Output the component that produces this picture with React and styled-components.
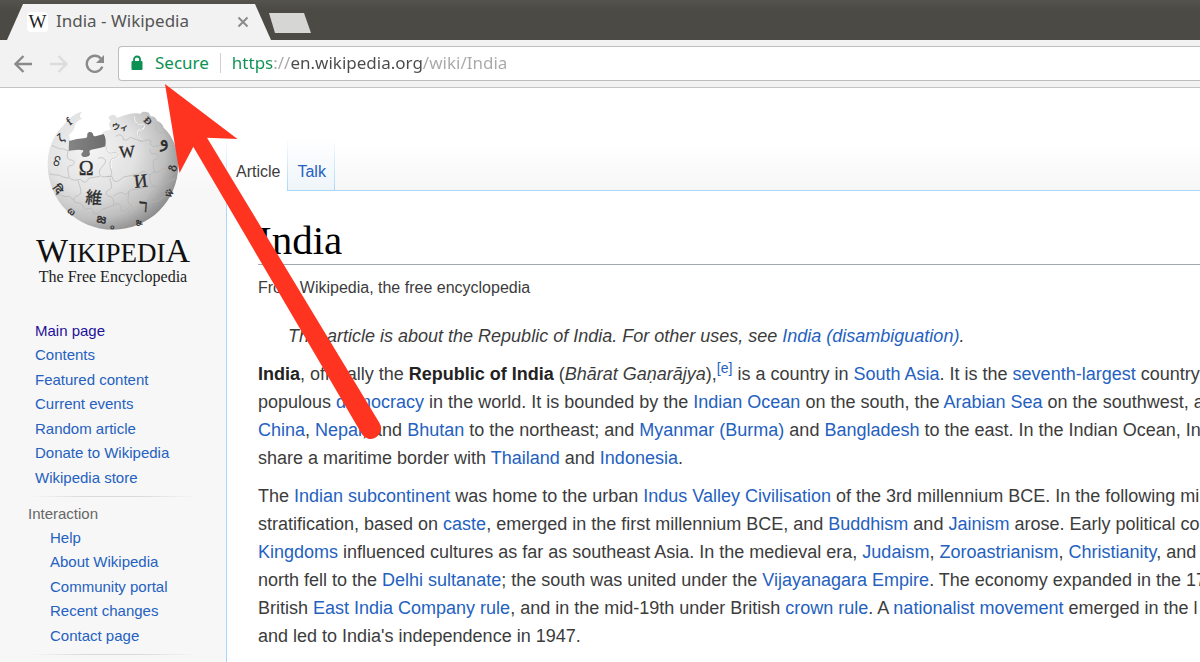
import React from "react";
import styled, { createGlobalStyle } from "styled-components";

const mainLinks = [
  "Main page",
  "Contents",
  "Featured content",
  "Current events",
  "Random article",
  "Donate to Wikipedia",
  "Wikipedia store",
];

const interactionLinks = [
  "Help",
  "About Wikipedia",
  "Community portal",
  "Recent changes",
  "Contact page",
];

const Wiki = ({ children }) => <Link href="#">{children}</Link>;

const Globe = () => (
  <GlobeSvg viewBox="78 40 402 372" role="img" aria-label="Wikipedia globe">
    <defs>
      <radialGradient id="ball" cx="0.33" cy="0.34" r="0.76">
        <stop offset="0" stopColor="#f4f4f4" />
        <stop offset="0.45" stopColor="#e2e2e2" />
        <stop offset="0.75" stopColor="#bebebe" />
        <stop offset="1" stopColor="#808080" />
      </radialGradient>
      <linearGradient id="hole" x1="0" y1="0" x2="1" y2="0">
        <stop offset="0" stopColor="#858585" />
        <stop offset="1" stopColor="#6c6c6c" />
      </linearGradient>
    </defs>
    <path
      fill="url(#ball)"
      d="M187 52C176 60 179 68 186 72C176 77 165 84 164 96C163 105 156 112 147 121L152 140L252 122L246 114C254 108 262 107 270 107C276 101 265 95 267 88C270 80 275 78 268 74C262 68 272 58 284 62C292 66 287 72 297 68C318 60 339 53 358 57C366 57 363 50 374 51C389 52 389 59 393 65C404 65 409 71 411 78C424 83 429 91 431 99C445 111 454 127 461 142C470 163 476 187 475 211C474 318 389 405 279 405C171 405 83 318 83 210C83 165 98 127 125 98C136 84 148 69 164 60C173 55 180 52 187 52Z"
    />
    <path
      fill="url(#hole)"
      d="M147 139C163 134 178 132 197 130C204 128 201 122 202 117C206 109 218 111 219 119C220 124 222 126 229 124L251 118C258 128 258 142 256 155C241 160 228 163 214 165C207 166 208 172 210 177C210 187 190 190 185 183C181 174 193 172 189 167C175 163 159 167 146 169Z"
    />
    <g fill="none" stroke="#ffffff" strokeWidth="4">
      <path d="M258 157C261 169 269 177 282 174C299 173 298 188 286 190C270 192 270 205 274 222" />
      <path d="M343 64C340 84 350 89 362 87C378 90 373 103 360 106C348 110 356 123 361 137" />
    </g>
    <g fill="none" stroke="#b4b4b4" strokeWidth="2">
      <path d="M144 170C138 190 145 197 155 196C169 199 161 214 151 213C139 214 144 232 148 248" />
      <path d="M258 155C259 170 267 178 279 174C296 170 300 187 285 190C270 190 267 207 273 225C279 243 272 247 260 246" />
      <path d="M234 191C251 184 263 197 253 208C242 223 234 228 240 241C247 253 270 241 276 246C281 270 296 260 311 247L357 238" />
      <path d="M148 248C157 260 169 256 182 254C190 267 204 263 205 251L240 245" />
      <path d="M174 258C179 275 187 289 179 300C169 305 160 306 162 319C169 329 178 321 185 330L197 344" />
      <path d="M269 250C274 269 280 279 267 286C255 288 256 302 267 305C277 305 283 312 281 333" />
      <path d="M198 345C213 335 222 344 220 355C232 363 240 350 247 344L282 332C294 321 309 331 302 344C303 354 317 350 327 337" />
      <path d="M343 64C336 80 348 91 361 86C374 87 374 99 360 106C351 110 356 126 362 141" />
      <path d="M287 125C300 116 311 122 309 134C318 140 326 132 331 128L361 139C374 142 383 130 393 139C389 154 398 158 413 153L458 149" />
      <path d="M391 164C389 176 399 180 407 177C421 182 417 194 404 194C395 199 402 218 403 235" />
      <path d="M357 239C367 228 374 227 382 238C392 245 398 233 403 231C420 237 425 221 433 222L471 207" />
      <path d="M389 242C389 263 393 273 404 274C415 279 407 289 397 292C389 295 389 310 383 326" />
      <path d="M281 303C294 297 303 289 313 298C324 302 326 287 334 286L384 278C397 271 420 280 434 267L467 251" />
      <path d="M327 288C326 309 319 318 330 330C342 335 336 343 326 348L320 377" />
      <path d="M384 326C396 317 412 326 421 313L449 296" />
      <path d="M96 153C109 157 119 166 128 162L145 169" />
      <path d="M88 237C103 244 116 237 125 246L147 251" />
      <path d="M105 301C121 295 132 310 148 305L161 316" />
      <path d="M409 92C403 107 414 115 424 113L443 116" />
    </g>
    <GlobeLetters>
      <text x="176" y="242" fontSize="60">Ω</text>
      <text x="297" y="188" fontSize="50" transform="rotate(-4 320 172)">W</text>
      <text x="342" y="278" fontSize="56" transform="rotate(-7 360 260)">И</text>
      <text x="197" y="327" fontSize="50" transform="rotate(6 222 310)">維</text>
      <text x="357" y="352" fontSize="54" transform="rotate(5 371 335)">ר</text>
      <text x="276" y="106" fontSize="25" transform="rotate(6 298 92)">ウィ</text>
      <text x="374" y="92" fontSize="40" transform="rotate(45 388 80)">ᴆ</text>
      <text x="417" y="155" fontSize="58" transform="rotate(-12 430 147)">و</text>
      <text x="117" y="140" fontSize="36" transform="rotate(-38 125 132)">ζ</text>
      <text x="94" y="212" fontSize="34" transform="rotate(-76 106 202)">တ</text>
      <text x="101" y="294" fontSize="34" transform="rotate(54 113 282)">दि</text>
      <text x="143" y="361" fontSize="34" transform="rotate(39 157 352)">ω</text>
      <text x="229" y="385" fontSize="40" transform="rotate(12 245 376)">జ</text>
      <text x="347" y="391" fontSize="25" transform="rotate(-20 360 383)">&</text>
      <text x="436" y="304" fontSize="34" transform="rotate(-58 450 295)">ẅ</text>
      <text x="443" y="225" fontSize="32" transform="rotate(-72 455 216)">გ</text>
      <text x="142" y="88" fontSize="34" transform="rotate(-38 152 80)">f</text>
      <text x="270" y="403" fontSize="18">ഠ</text>
    </GlobeLetters>
  </GlobeSvg>
);

const Arrow = () => (
  <ArrowSvg viewBox="0 0 240 360" aria-hidden="true">
    <path
      fill="#ff3420"
      d="M5 4L77.500 59L47 57.700L219.500 343A10 10 0 0 1 201.800 354L33.300 66.700L19.500 93Z"
    />
  </ArrowSvg>
);

const App = () => {
  return (
    <>
      <GlobalStyle />
      <TabStrip>
        <Tab>
          <Favicon>W</Favicon>
          <TabTitle>India - Wikipedia</TabTitle>
          <IconButton aria-label="Close tab">
            <svg width="12" height="12" viewBox="0 0 12 12">
              <path d="M1.500 1.500L10.500 10.500M10.500 1.500L1.500 10.500" stroke="#8b8b8b" strokeWidth="2" />
            </svg>
          </IconButton>
        </Tab>
        <NewTab aria-label="New tab" />
      </TabStrip>

      <Toolbar>
        <IconButton aria-label="Back">
          <svg width="20" height="20" viewBox="0 0 20 20" fill="none" stroke="#8a8a8a" strokeWidth="2.400">
            <path d="M19 10H3M10.500 2L2.500 10L10.500 18" />
          </svg>
        </IconButton>
        <IconButton aria-label="Forward">
          <svg width="20" height="20" viewBox="0 0 20 20" fill="none" stroke="#dcdcdc" strokeWidth="2.400">
            <path d="M1 10H17M9.500 2L17.500 10L9.500 18" />
          </svg>
        </IconButton>
        <IconButton aria-label="Reload">
          <svg width="20" height="20" viewBox="0 0 20 20">
            <path d="M17.300 12.600A8 8 0 1 1 15.800 4.500" fill="none" stroke="#8a8a8a" strokeWidth="2.400" />
            <path d="M19 1V9H11Z" fill="#8a8a8a" />
          </svg>
        </IconButton>
        <AddressBar>
          <svg width="12" height="16" viewBox="0 0 12 16">
            <path d="M3 7V4.500A3 3 0 0 1 9 4.500V7" fill="none" stroke="#0b9152" strokeWidth="1.800" />
            <rect x="0.500" y="6" width="11" height="9" rx="1" fill="#0b9152" />
          </svg>
          <Secure>Secure</Secure>
          <UrlInput aria-label="Address" defaultValue="https://en.wikipedia.org/wiki/India" />
        </AddressBar>
      </Toolbar>

      <Page>
        <Sidebar>
          <Logo href="#">
            <Globe />
            <Wordmark>
              <Cap>W</Cap>IKIPEDI<Cap>A</Cap>
            </Wordmark>
            <Tagline>The Free Encyclopedia</Tagline>
          </Logo>
          <NavList>
            {mainLinks.map((name, i) => (
              <li key={name}>
                <NavLink href="#" $visited={i === 0}>
                  {name}
                </NavLink>
              </li>
            ))}
          </NavList>
          <Divider />
          <NavTitle>Interaction</NavTitle>
          <NavList $nested>
            {interactionLinks.map((name) => (
              <li key={name}>
                <NavLink href="#">{name}</NavLink>
              </li>
            ))}
          </NavList>
          <Divider />
        </Sidebar>

        <Content>
          <PageTabs>
            <PageTab href="#" $active>
              Article
            </PageTab>
            <PageTab href="#">Talk</PageTab>
            <TabsRest />
          </PageTabs>
          <Article>
            <Title>India</Title>
            <SiteSub>From Wikipedia, the free encyclopedia</SiteSub>
            <Hatnote>
              This article is about the Republic of India. For other uses, see{" "}
              <Wiki>India (disambiguation)</Wiki>.
            </Hatnote>
            <Paragraph>
              <b>India</b>, officially the <b>Republic of India</b> (<i>Bhārat Gaṇarājya</i>),
              <Sup>
                <Wiki>[e]</Wiki>
              </Sup>{" "}
              is a country in <Wiki>South Asia</Wiki>. It is the <Wiki>seventh-largest</Wiki> country
              <br />
              populous <Wiki>democracy</Wiki> in the world. It is bounded by the{" "}
              <Wiki>Indian Ocean</Wiki> on the south, the <Wiki>Arabian Sea</Wiki> on the southwest, a
              <br />
              <Wiki>China</Wiki>, <Wiki>Nepal</Wiki>, and <Wiki>Bhutan</Wiki> to the northeast; and{" "}
              <Wiki>Myanmar (Burma)</Wiki> and <Wiki>Bangladesh</Wiki> to the east. In the Indian
              Ocean, In
              <br />
              share a maritime border with <Wiki>Thailand</Wiki> and <Wiki>Indonesia</Wiki>.
            </Paragraph>
            <Paragraph>
              The <Wiki>Indian subcontinent</Wiki> was home to the urban{" "}
              <Wiki>Indus Valley Civilisation</Wiki> of the 3rd millennium BCE. In the following mil
              <br />
              stratification, based on <Wiki>caste</Wiki>, emerged in the first millennium BCE, and{" "}
              <Wiki>Buddhism</Wiki> and <Wiki>Jainism</Wiki> arose. Early political co
              <br />
              <Wiki>Kingdoms</Wiki> influenced cultures as far as southeast Asia. In the medieval era,{" "}
              <Wiki>Judaism</Wiki>, <Wiki>Zoroastrianism</Wiki>, <Wiki>Christianity</Wiki>, and
              <br />
              north fell to the <Wiki>Delhi sultanate</Wiki>; the south was united under the{" "}
              <Wiki>Vijayanagara Empire</Wiki>. The economy expanded in the 17
              <br />
              British <Wiki>East India Company rule</Wiki>, and in the mid-19th under British{" "}
              <Wiki>crown rule</Wiki>. A <Wiki>nationalist movement</Wiki> emerged in the l
              <br />
              and led to India's independence in 1947.
            </Paragraph>
          </Article>
        </Content>
        <Arrow />
      </Page>
    </>
  );
};

export default App;

const GlobalStyle = createGlobalStyle`
  * {
    box-sizing: border-box;
  }
  body {
    margin: 0;
    background: #f7f7f7;
    font-family: "Liberation Sans", Arial, sans-serif;
    color: #3c3c3c;
    overflow: hidden;
  }
`;

const TabStrip = styled.header`
  display: flex;
  align-items: flex-end;
  height: 40px;
  padding-left: 7px;
  background: linear-gradient(#55534d, #4c4a44 10px);
`;
const Tab = styled.div`
  display: flex;
  align-items: center;
  width: 264px;
  height: 36px;
  padding: 0 22px 0 20px;
  background: #f2f2f2;
  clip-path: polygon(16px 0, 248px 0, 264px 100%, 0 100%);
`;
const Favicon = styled.span`
  width: 21px;
  border-radius: 4px;
  background: #ffffff;
  color: #222222;
  font: 19px/20px "Liberation Serif", serif;
  text-align: center;
`;
const TabTitle = styled.span`
  flex: 1;
  padding: 0 0 2px 8px;
  font: 17px/24px "Noto Sans", sans-serif;
  color: #555555;
  white-space: nowrap;
`;
const IconButton = styled.button`
  display: flex;
  padding: 0;
  border: 0;
  background: none;
`;
const NewTab = styled.button`
  width: 42px;
  height: 20px;
  margin: 0 0 7px -2px;
  border: 0;
  background: #d6d6d5;
  clip-path: polygon(0 0, 35px 0, 100% 100%, 6px 100%);
`;

const Toolbar = styled.div`
  display: flex;
  align-items: center;
  gap: 16px;
  height: 48px;
  padding-left: 13px;
  border-bottom: 1px solid #c4c4c4;
  background: #f2f2f2;
`;
const AddressBar = styled.div`
  flex: 1;
  display: flex;
  align-items: center;
  height: 35px;
  margin-left: -3px;
  padding: 0 0 1px 12px;
  border: 1px solid #bdbdbd;
  border-right: 0;
  border-radius: 4px 0 0 4px;
  background: #ffffff;
`;
const Secure = styled.span`
  margin-left: 12px;
  padding-right: 11px;
  border-right: 1px solid #d0d0d0;
  font: 17px/20px "Noto Sans", sans-serif;
  color: #0b9152;
`;
const UrlInput = styled.input`
  flex: 1;
  margin-left: 11px;
  padding: 0;
  border: 0;
  outline: 0;
  font: 17px/24px "Noto Sans", sans-serif;
  color: transparent;
  background: linear-gradient(
    to right,
    #0b9152 42px,
    #a8a8a8 42px 58px,
    #4a4a4a 58px 190px,
    #a8a8a8 190px
  );
  background-clip: text;
`;

const Page = styled.div`
  position: relative;
  display: grid;
  grid-template-columns: 226px minmax(0, 1fr);
  background: linear-gradient(#ffffff 54px, #f7f7f7 103px);
`;
const Sidebar = styled.nav`
  padding: 20px 28px 0 28px;
`;
const Logo = styled.a`
  display: flex;
  flex-direction: column;
  align-items: center;
  margin-bottom: 34px;
  text-decoration: none;
  color: #111111;
`;
const GlobeSvg = styled.svg`
  width: 134px;
  height: 124px;
`;
const GlobeLetters = styled.g`
  fill: #2c2c2c;
  stroke: #2c2c2c;
  stroke-width: 1px;
  font-family: "Liberation Serif", "DejaVu Serif", "Noto Sans CJK JP", serif;
`;
const Wordmark = styled.span`
  margin-top: 5px;
  font: 27px/28px "Liberation Serif", serif;
`;
const Cap = styled.span`
  font-size: 34px;
`;
const Tagline = styled.span`
  margin-top: 2px;
  font: 16px/16px "Liberation Serif", serif;
  color: #222222;
`;
const NavList = styled.ul`
  display: grid;
  grid-auto-rows: 24px 25px;
  margin: 0;
  padding: 0 0 0 ${(props) => (props.$nested ? "22px" : "7px")};
  list-style: none;
  font-size: 15px;
  line-height: 24px;
`;
const NavLink = styled.a`
  color: ${(props) => (props.$visited ? "#1f1199" : "#2461c0")};
  text-decoration: none;
`;
const NavTitle = styled.h3`
  margin: 0;
  font-size: 15px;
  line-height: 24px;
  font-weight: normal;
  color: #666666;
`;
const Divider = styled.hr`
  height: 1px;
  margin: 6px 0 5px;
  border: 0;
  background: linear-gradient(to right, transparent, #dadada 33%, #dadada 66%, transparent);
`;

const Content = styled.div`
  display: flex;
  flex-direction: column;
`;
const PageTabs = styled.div`
  display: flex;
  height: 103px;
  padding-top: 50px;
`;
const PageTab = styled.a`
  padding: 24px 8px 0 9px;
  border-style: solid;
  border-width: 0 1px 1px 0;
  border-image: linear-gradient(#ffffff, #a7d7f9) 1;
  background: ${(props) =>
    props.$active ? "#ffffff" : "linear-gradient(#ffffff, #eef5f9)"};
  font-size: 16px;
  line-height: 20px;
  color: ${(props) => (props.$active ? "#3c3c3c" : "#2461c0")};
  text-decoration: none;
  ${(props) => props.$active && "border-width: 0 1px; padding: 24px 7px 0 9px;"}
`;
const TabsRest = styled.div`
  flex: 1;
  border-bottom: 1px solid #a7d7f9;
`;
const Article = styled.main`
  flex: 1;
  padding: 25px 0 15px 31px;
  border-left: 1px solid #a7d7f9;
  background: #ffffff;
  white-space: nowrap;
  overflow: hidden;
`;
const Title = styled.h1`
  margin: 0;
  border-bottom: 1px solid #a2a9b1;
  font: 41px/48px "Liberation Serif", serif;
  color: #000000;
`;
const SiteSub = styled.div`
  padding-top: 12px;
  font-size: 16px;
  line-height: 22px;
`;
const Hatnote = styled.div`
  margin-top: 23px;
  padding-left: 30px;
  font-size: 18px;
  line-height: 28px;
  font-style: italic;
`;
const Paragraph = styled.p`
  margin: 10px 0;
  font-size: 18px;
  line-height: 28px;

  b {
    color: #222222;
  }
`;
const Link = styled.a`
  color: #2461c0;
  text-decoration: none;
`;
const Sup = styled.sup`
  font-size: 14px;
  line-height: 1;
`;

const ArrowSvg = styled.svg`
  position: absolute;
  top: -8px;
  left: 160px;
  width: 240px;
  height: 360px;
  pointer-events: none;
`;
